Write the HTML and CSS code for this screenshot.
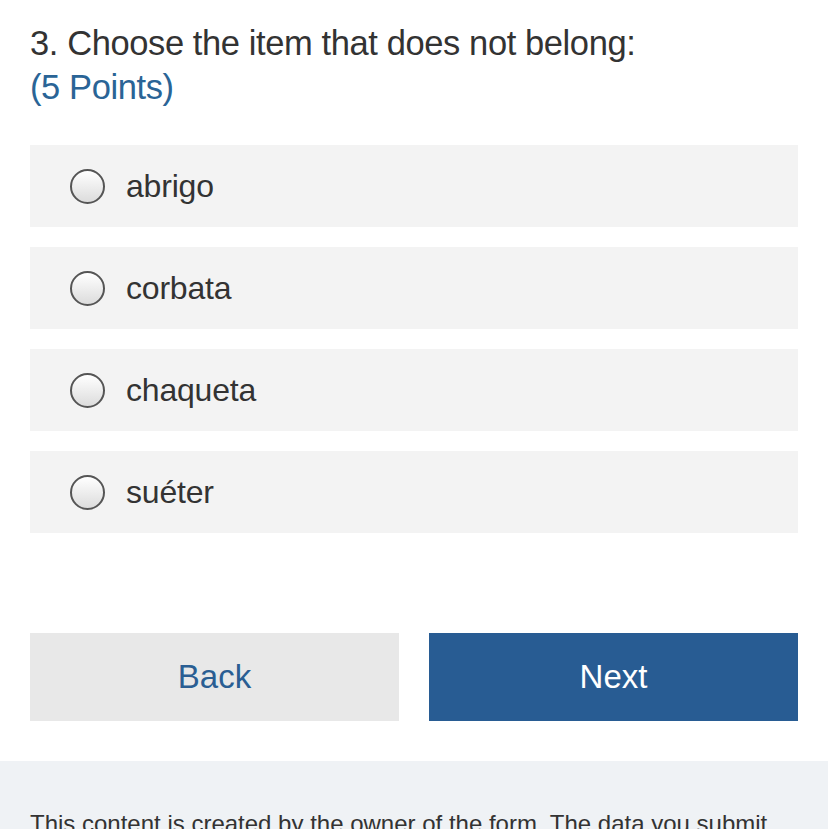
FILE: index.html
```html
<!DOCTYPE html>
<html>
<head>
<meta charset="utf-8">
<link rel="stylesheet" href="styles.css">
</head>
<body>
<main class="page">
  <div class="question">
    <div class="q-title">3. Choose the item that does not belong:</div>
    <div class="q-points">(5 Points)</div>
  </div>
  <div class="options">
    <label class="option"><span class="radio"></span><span class="opt-text">abrigo</span></label>
    <label class="option"><span class="radio"></span><span class="opt-text">corbata</span></label>
    <label class="option"><span class="radio"></span><span class="opt-text">chaqueta</span></label>
    <label class="option"><span class="radio"></span><span class="opt-text">suéter</span></label>
  </div>
  <div class="buttons">
    <button class="btn btn-back">Back</button>
    <button class="btn btn-next">Next</button>
  </div>
</main>
<footer class="footer">
  <p class="footer-text">This content is created by the owner of the form. The data you submit will be sent to the form owner.</p>
</footer>
</body>
</html>
```
FILE: styles.css
```css
html, body {
  margin: 0;
  padding: 0;
  background: #ffffff;
  font-family: "Liberation Sans", Arial, sans-serif;
  color: #333333;
}
.page {
  padding: 21px 30px 40px 30px;
}
.question {
  margin-bottom: 36px;
}
.q-title {
  font-size: 34.5px;
  line-height: 44px;
  color: #333333;
  letter-spacing: -0.4px;
}
.q-points {
  font-size: 34.5px;
  line-height: 44px;
  color: #2a6496;
  letter-spacing: -0.4px;
}
.options {
  display: flex;
  flex-direction: column;
  gap: 20px;
}
.option {
  display: flex;
  align-items: center;
  height: 82px;
  background: #f3f3f3;
  padding-left: 40px;
}
.radio {
  width: 31px;
  height: 31px;
  border: 2px solid #555555;
  border-radius: 50%;
  background: linear-gradient(#ffffff, #dcdcdc);
  flex: none;
}
.opt-text {
  margin-left: 21px;
  font-size: 32px;
  color: #333333;
  letter-spacing: -0.2px;
}
.buttons {
  display: flex;
  gap: 30px;
  margin-top: 100px;
}
.btn {
  flex: 1;
  height: 88px;
  border: none;
  font-family: "Liberation Sans", Arial, sans-serif;
  font-size: 33px;
  cursor: pointer;
}
.btn-back {
  background: #e8e8e8;
  color: #2a5e93;
}
.btn-next {
  background: #285c93;
  color: #ffffff;
}
.footer {
  background: #eff2f5;
  padding: 45px 30px 20px 30px;
}
.footer-text {
  margin: 0;
  font-size: 24px;
  line-height: 36px;
  color: #333333;
}
```
